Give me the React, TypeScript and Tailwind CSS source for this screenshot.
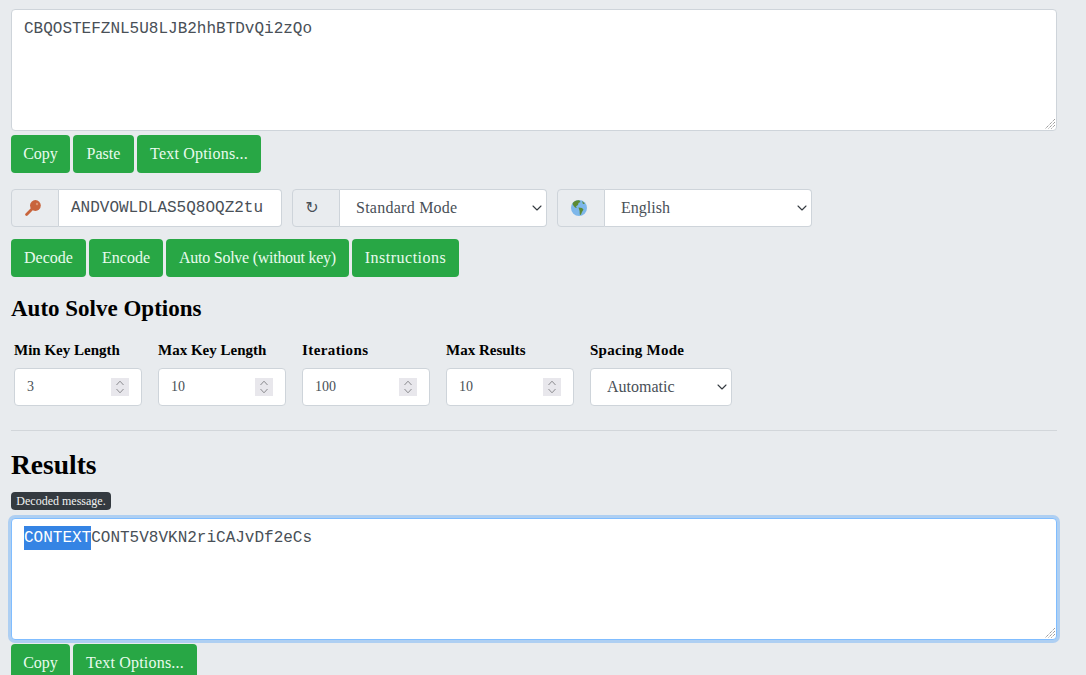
import React, { useEffect, useRef } from 'react';
import { ChevronDown } from 'lucide-react';

const serif = "font-['Liberation_Serif',serif]";

const GreenButton: React.FC<{ className: string; children: React.ReactNode }> = ({ className, children }) => (
  <button className={`h-[38px] shrink-0 rounded bg-[#28a745] text-center text-[16px] whitespace-nowrap text-[#e9fbee] ${serif} ${className}`}>
    {children}
  </button>
);

const KeyIcon = () => (
  <svg width="16" height="16" viewBox="0 0 16 16">
    <circle cx="10.4" cy="5.5" r="5.4" fill="#c8643c" />
    <path d="M7.5 8.5 L1.6 14.4" stroke="#c8643c" strokeWidth="2.8" strokeLinecap="round" />
    <circle cx="12" cy="4" r="1.2" fill="#dd9572" />
  </svg>
);

const GlobeIcon = () => (
  <svg width="16" height="16" viewBox="0 0 16 16">
    <circle cx="8" cy="8" r="8" fill="#7db7ea" />
    <path d="M1.5 3.5 C3 1 6 0 8.5 .4 L9.5 2 L7.5 3 L7 5 L5 6.2 L5.8 8 L4 7.4 L2 5Z" fill="#5c8a34" />
    <path d="M7.5 7.6 L11 8 L12.5 9.5 L11 12 L9.8 15 L8.8 14.5 L8.6 11 Z" fill="#5c8a34" />
    <path d="M11 1 L14 3.4 L12 4 Z" fill="#5c8a34" />
  </svg>
);

const ResizeGrip = () => (
  <svg width="10" height="10" viewBox="0 0 10 10" className="pointer-events-none absolute right-[2px] bottom-[2px]">
    <g stroke="#747474" strokeWidth="1" strokeDasharray="1 1">
      <path d="M10 0 L0 10" />
      <path d="M10 3 L3 10" />
      <path d="M10 6 L6 10" />
    </g>
  </svg>
);

const SpinBox = () => (
  <span className="pointer-events-none absolute top-[10px] right-[13px] flex h-[18px] w-[18px] items-center justify-center bg-[#e8e7ec]">
    <svg width="18" height="18" viewBox="0 0 18 18" fill="none" stroke="#8a8a8e" strokeWidth="1">
      <path d="M5.5 7 L9 3.2 L12.5 7" />
      <path d="M5.5 11 L9 14.8 L12.5 11" />
    </svg>
  </span>
);

const Addon: React.FC<{ children: React.ReactNode }> = ({ children }) => (
  <span className="flex h-full w-[48px] shrink-0 items-center justify-center rounded-l border border-[#ced4da] bg-[#e9ecef] pr-[5px] text-[#495057]">
    {children}
  </span>
);

const SelectBox: React.FC<{ className: string; value: string }> = ({ className, value }) => (
  <div className="relative h-full min-w-0 flex-1">
    <select className={`h-full w-full appearance-none border border-[#ced4da] bg-white px-[16px] text-[16px] text-[#495057] outline-none ${serif} ${className}`}>
      <option>{value}</option>
    </select>
    <ChevronDown size={16} strokeWidth={1.6} className="pointer-events-none absolute top-[11px] right-[2px] text-[#343a40]" />
  </div>
);

const NumberField: React.FC<{ label: string; value: number; labelClass?: string }> = ({ label, value, labelClass }) => (
  <label className="mr-[16px] flex w-[128px] flex-col">
    <span className={`mb-[6px] h-[24px] text-[15px] leading-[24px] font-bold whitespace-nowrap text-black ${serif} ${labelClass ?? ''}`}>{label}</span>
    <span className="relative block h-[38px]">
      <input
        type="number"
        defaultValue={value}
        className={`h-full w-full rounded border border-[#ced4da] bg-white pr-[9px] pl-[12px] text-[14px] text-[#495057] outline-none [&::-webkit-inner-spin-button]:appearance-none ${serif}`}
      />
      <SpinBox />
    </span>
  </label>
);

export default function App() {
  const resultRef = useRef<HTMLTextAreaElement>(null);

  useEffect(() => {
    resultRef.current?.focus();
    resultRef.current?.setSelectionRange(0, 7);
  }, []);

  return (
    <div className="h-[675px] w-[1086px] overflow-hidden bg-[#e8ebee] pt-[9px] pl-[11px]">
      <div className="flex w-[1046px] flex-col">
        <div className="relative h-[122px]">
          <textarea
            defaultValue="CBQOSTEFZNL5U8LJB2hhBTDvQi2zQo"
            className="block h-full w-full resize-none rounded border border-[#ced4da] bg-white px-[12px] pt-[7px] pb-[5px] font-['Liberation_Mono',monospace] text-[16px] leading-[24px] text-[#495057] outline-none"
          />
          <ResizeGrip />
        </div>
        <div className="mt-[4px] flex gap-[3px]">
          <GreenButton className="w-[59px]">Copy</GreenButton>
          <GreenButton className="w-[61px]">Paste</GreenButton>
          <GreenButton className="w-[124px] tracking-[0.2px]">Text Options...</GreenButton>
        </div>

        <div className="mt-[16px] flex h-[38px] gap-[10px]">
          <div className="flex h-full w-[271px]">
            <Addon><KeyIcon /></Addon>
            <input
              defaultValue="ANDVOWLDLAS5Q8OQZ2tu"
              className="h-full min-w-0 flex-1 rounded-r border border-l-0 border-[#ced4da] bg-white px-[12px] font-['Liberation_Mono',monospace] text-[16px] text-[#495057] outline-none"
            />
          </div>
          <div className="flex h-full w-[255px]">
            <Addon><span className="mr-[3px] font-['DejaVu_Sans',sans-serif] text-[16px]">↻</span></Addon>
            <SelectBox className="rounded-r border-l-0 tracking-[0.25px]" value="Standard Mode" />
          </div>
          <div className="flex h-full w-[255px]">
            <Addon><GlobeIcon /></Addon>
            <SelectBox className="rounded-r border-l-0" value="English" />
          </div>
        </div>

        <div className="mt-[12px] flex gap-[3px]">
          <GreenButton className="w-[75px]">Decode</GreenButton>
          <GreenButton className="w-[74px]">Encode</GreenButton>
          <GreenButton className="w-[183px] tracking-[-0.26px]">Auto Solve (without key)</GreenButton>
          <GreenButton className="w-[107px] tracking-[0.5px]">Instructions</GreenButton>
        </div>

        <h2 className={`mt-[17px] h-[29px] text-[23px] leading-[29px] font-bold text-black ${serif}`}>Auto Solve Options</h2>

        <div className="mt-[15px] flex items-start pl-[3px]">
          <NumberField label="Min Key Length" value={3} />
          <NumberField label="Max Key Length" value={10} />
          <NumberField label="Iterations" value={100} labelClass="tracking-[0.4px]" />
          <NumberField label="Max Results" value={10} />
          <label className="flex w-[142px] flex-col">
            <span className={`mb-[6px] h-[24px] text-[15px] leading-[24px] font-bold tracking-[0.25px] text-black ${serif}`}>Spacing Mode</span>
            <div className="h-[38px]">
              <SelectBox className="rounded" value="Automatic" />
            </div>
          </label>
        </div>

        <hr className="mt-[24px] border-t border-[#d2d6da]" />

        <h2 className={`mt-[16px] h-[36px] text-[27.5px] leading-[36px] font-bold text-black ${serif}`}>Results</h2>

        <span className={`mt-[9px] flex h-[18px] w-[100px] items-center justify-center rounded bg-[#343a40] text-[12px] whitespace-nowrap text-[#f2f2f2] ${serif}`}>
          Decoded message.
        </span>

        <div className="relative mt-[8px] h-[122px] shrink-0">
          <textarea
            ref={resultRef}
            defaultValue="CONTEXTCONT5V8VKN2riCAJvDf2eCs"
            className="block h-full w-full resize-none rounded border border-[#80bdff] bg-white px-[12px] pt-[7px] pb-[5px] font-['Liberation_Mono',monospace] text-[16px] leading-[24px] text-[#495057] shadow-[0_0_0_3px_rgba(0,123,255,0.25)] outline-none selection:bg-[#3584e4] selection:text-white"
          />
          <ResizeGrip />
        </div>
        <div className="mt-[4px] flex gap-[3px]">
          <GreenButton className="w-[59px]">Copy</GreenButton>
          <GreenButton className="w-[124px] tracking-[0.2px]">Text Options...</GreenButton>
        </div>
      </div>
    </div>
  );
}
